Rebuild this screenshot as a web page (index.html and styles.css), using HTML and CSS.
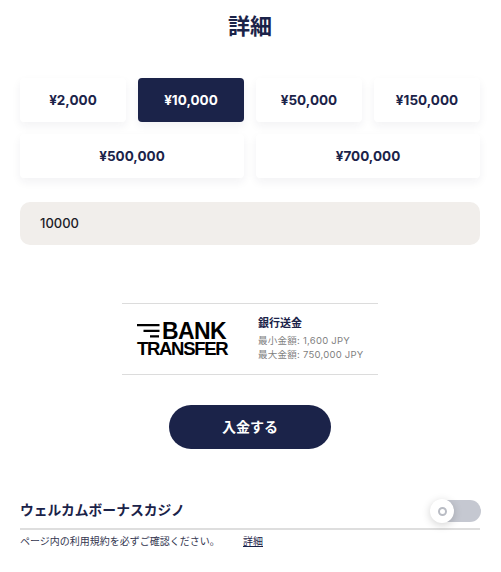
FILE: index.html
```html
<!DOCTYPE html>
<html lang="ja">
<head>
<meta charset="utf-8">
<title>詳細</title>
<link rel="stylesheet" href="styles.css">
</head>
<body>
<main class="page">
  <h1 class="title">詳細</h1>
  <div class="amounts">
    <button class="amount">¥2,000</button>
    <button class="amount active">¥10,000</button>
    <button class="amount">¥50,000</button>
    <button class="amount">¥150,000</button>
    <button class="amount wide">¥500,000</button>
    <button class="amount wide">¥700,000</button>
  </div>
  <div class="input">10000</div>
  <section class="method">
    <div class="logo">
      <div class="logo-top">
        <svg class="logo-lines" width="23" height="14" viewBox="0 0 23 14"><path d="M0 1.2H22.5M6.5 6.8H22.5M13 12.4H22" stroke="#000" stroke-width="2.3"/></svg>
        <span class="logo-bank">BANK</span>
      </div>
      <div class="logo-transfer">TRANSFER</div>
    </div>
    <div class="method-info">
      <div class="method-name">銀行送金</div>
      <div class="method-limit">最小金額: 1,600 JPY</div>
      <div class="method-limit">最大金額: 750,000 JPY</div>
    </div>
  </section>
  <div class="submit-row"><button class="submit">入金する</button></div>
  <section class="bonus">
    <div class="bonus-head">
      <span class="bonus-name">ウェルカムボーナスカジノ</span>
      <span class="toggle"><span class="knob"><span class="knob-ring"></span></span></span>
    </div>
    <div class="bonus-note">
      <span class="note-text">ページ内の利用規約を必ずご確認ください。</span>
      <a class="note-link" href="#">詳細</a>
    </div>
  </section>
</main>
</body>
</html>
```
FILE: styles.css
```css
* { box-sizing: border-box; }
html, body { margin: 0; background: #fff; }
body {
  font-family: Inter, "Noto Sans CJK JP", sans-serif;
  color: #1b2349;
}
.page { width: 501px; height: 572px; padding: 0 21px 0 20px; overflow: hidden; }
.title {
  margin: 0;
  padding-top: 11px;
  height: 78px;
  text-align: center;
  font-size: 22px;
  line-height: 30px;
  font-weight: 700;
}
.amounts {
  display: grid;
  grid-template-columns: repeat(12, 1fr);
  gap: 12px;
}
.amount {
  grid-column: span 3;
  height: 44px;
  border: 0;
  border-radius: 4px;
  padding: 0;
  background: #fff;
  color: #1b2349;
  font-family: inherit;
  font-size: 13.5px;
  font-weight: 700;
  box-shadow: 0 4px 10px rgba(27, 35, 73, 0.06);
}
.amount.wide { grid-column: span 6; }
.amount.active { background: #1b2349; color: #fff; }
.input {
  margin-top: 24px;
  height: 43px;
  padding-left: 20px;
  background: #f1eeeb;
  border-radius: 10px;
  font-size: 13px;
  font-weight: 500;
  line-height: 43px;
  color: #1c1c28;
}
.method {
  margin: 58px auto 0;
  width: 256px;
  height: 72px;
  border-top: 1px solid #dcdcdc;
  border-bottom: 1px solid #dcdcdc;
  display: flex;
  align-items: center;
  padding-left: 15px;
  gap: 30px;
}
.logo { color: #000; font-family: "Liberation Sans", sans-serif; font-weight: 700; width: 91px; flex: none; }
.logo-top { display: flex; align-items: center; gap: 2px; height: 20px; }
.logo-lines { flex: none; }
.logo-bank { font-size: 23px; line-height: 20px; letter-spacing: -0.6px; }
.logo-transfer { font-size: 18.5px; line-height: 16px; letter-spacing: -1.3px; white-space: nowrap; }
.method-name { font-size: 11px; line-height: 16px; font-weight: 700; margin-bottom: 3px; margin-top: -2px; }
.method-limit { font-size: 9.5px; line-height: 14px; color: #7f7f7f; letter-spacing: 0.25px; white-space: nowrap; }
.submit-row { display: flex; justify-content: center; margin-top: 30px; }
.submit {
  width: 162px;
  height: 44px;
  border: 0;
  border-radius: 22px;
  background: #1b2349;
  color: #fff;
  font-family: inherit;
  font-size: 14px;
  font-weight: 700;
  padding-bottom: 4px;
}
.bonus { margin-top: 49px; }
.bonus-head {
  display: flex;
  align-items: center;
  justify-content: space-between;
  height: 32px;
  border-bottom: 2px solid #dedede;
  padding-bottom: 4px;
}
.bonus-name { font-size: 13.8px; font-weight: 700; margin-bottom: 5px; }
.toggle {
  width: 51px;
  height: 22px;
  margin-right: -1px;
  background: linear-gradient(90deg, transparent 12px, #c5c8d1 12px);
  border-radius: 11px;
  display: flex;
  align-items: center;
}
.knob {
  width: 24px;
  height: 24px;
  border-radius: 50%;
  background: #fff;
  box-shadow: 0 2px 8px rgba(0, 0, 0, 0.18);
  display: flex;
  align-items: center;
  justify-content: center;
}
.knob-ring { width: 9px; height: 9px; border-radius: 50%; border: 2px solid #b9bcc4; }
.bonus-note { display: flex; align-items: center; margin-top: 3px; font-size: 10px; line-height: 16px; color: #33364f; }
.note-text { width: 223px; }
.note-link { color: #1b2349; text-decoration: underline; }
```
